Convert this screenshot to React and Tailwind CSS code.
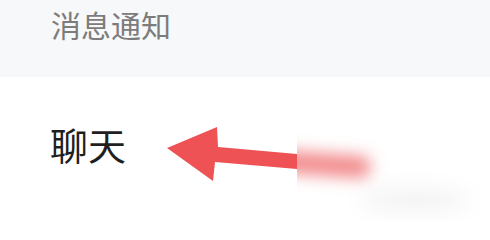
import React from 'react';

// 设置页片段：分组标题 + 「聊天」一项，右边是标注用的红色箭头
export default function App() {
  return (
    <div
      className="w-[490px] h-[221px] overflow-hidden bg-white flex flex-col"
      style={{ fontFamily: '"Noto Sans CJK SC", "Noto Sans", sans-serif' }}
    >
      {/* 分组标题 */}
      <div className="h-[77px] bg-[#f7f8fa] pl-[51px] pt-[9px]">
        <span className="text-[30px] leading-none text-[#7c7c7c] whitespace-nowrap">消息通知</span>
      </div>

      {/* 聊天 行 */}
      <div className="flex-1 flex items-start">
        <span className="w-[160px] shrink-0 pl-[50px] pt-[48px] text-[38px] leading-none text-[#1f1f1f] whitespace-nowrap">
          聊天
        </span>
        <svg width="330" height="144" viewBox="160 77 330 144" className="shrink-0">
          <defs>
            <clipPath id="blurArea">
              <rect x="297" y="130" width="200" height="97" />
            </clipPath>
            <filter id="soft" filterUnits="userSpaceOnUse" x="240" y="90" width="240" height="140">
              <feGaussianBlur stdDeviation="8" />
            </filter>
            <filter id="softer" filterUnits="userSpaceOnUse" x="300" y="150" width="200" height="80">
              <feGaussianBlur stdDeviation="10" />
            </filter>
          </defs>
          <polygon
            points="167,148 217,127 218,147 297,154 297,169 215,162 213,181"
            fill="#ef5254"
          />
          <g clipPath="url(#blurArea)">
            <line x1="275" y1="161" x2="360" y2="167" stroke="#ee6466" strokeOpacity="0.75" strokeWidth="22" strokeLinecap="round" filter="url(#soft)" />
            <ellipse cx="415" cy="200" rx="55" ry="13" fill="#000" fillOpacity="0.045" filter="url(#softer)" />
          </g>
        </svg>
      </div>
    </div>
  );
}
